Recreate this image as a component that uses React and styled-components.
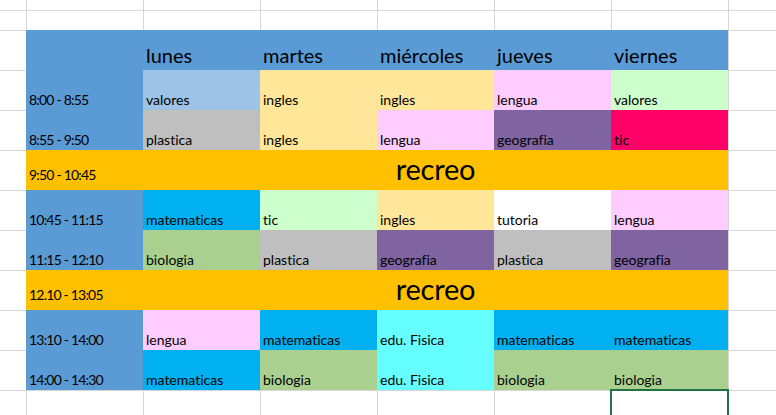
import React from "react";
import styled, { createGlobalStyle } from "styled-components";

const GlobalStyle = createGlobalStyle`
  html, body { margin: 0; padding: 0; background: #ffffff; overflow: hidden; }
  body {
    font-family: Lato, "Open Sans", sans-serif;
    color: #000;
    font-variant-ligatures: none;
    font-feature-settings: "liga" 0, "clig" 0;
  }
`;

const GRID = "#d6d6d6";

const Sheet = styled.div`
  display: grid;
  grid-template-columns: 26px repeat(6, 117px) 1fr;
  grid-template-rows: 10px 20px repeat(9, 40px) 40px;
  width: 776px;
  height: 415px;
  overflow: hidden;
`;

const Empty = styled.div`
  box-shadow: ${(p) =>
    [p.$noLeft ? null : `inset 1px 0 0 ${GRID}`, p.$noTop ? null : `inset 0 1px 0 ${GRID}`]
      .filter(Boolean)
      .join(", ") || "none"};
`;

const Selected = styled.div`
  position: relative;
  z-index: 1;
  box-shadow: 0 0 0 1px #217346, inset 0 0 0 1px #217346;
`;

const Cell = styled.div`
  display: flex;
  align-items: flex-end;
  background: ${(p) => p.$bg};
  padding: 0 0 ${(p) => p.$pb ?? 2}px 3px;
  font-size: ${(p) => p.$size ?? 14}px;
  line-height: normal;
  white-space: nowrap;
  overflow: hidden;
  grid-column: ${(p) => (p.$span ? `span ${p.$span}` : "auto")};
`;

const TimeCell = styled(Cell)`
  letter-spacing: -0.8px;
`;

const Recreo = styled(Cell)`
  justify-content: center;
  padding-left: 0;
  letter-spacing: -0.2px;
`;

const BLUE = "#5B9BD5";
const ORANGE = "#FFC000";
const C = {
  valores1: "#9DC3E6",
  ingles: "#FFE699",
  lengua: "#FFCCFF",
  valores2: "#CCFFCC",
  plastica: "#BFBFBF",
  geografia: "#8064A2",
  tic: "#FF0066",
  mate: "#00B0F0",
  bio: "#A9D08E",
  edu: "#66FFFF",
  white: "#FFFFFF",
};

const days = ["lunes", "martes", "miércoles", "jueves", "viernes"];

const rows = [
  { time: "8:00 - 8:55", cells: [["valores", C.valores1], ["ingles", C.ingles], ["ingles", C.ingles], ["lengua", C.lengua], ["valores", C.valores2]] },
  { time: "8:55 - 9:50", cells: [["plastica", C.plastica], ["ingles", C.ingles], ["lengua", C.lengua], ["geografia", C.geografia], ["tic", C.tic]] },
  { time: "9:50 - 10:45", recreo: true },
  { time: "10:45 - 11:15", cells: [["matematicas", C.mate], ["tic", C.valores2], ["ingles", C.ingles], ["tutoria", C.white], ["lengua", C.lengua]] },
  { time: "11:15 - 12:10", cells: [["biologia", C.bio], ["plastica", C.plastica], ["geografia", C.geografia], ["plastica", C.plastica], ["geografia", C.geografia]] },
  { time: "12.10 - 13:05", recreo: true },
  { time: "13:10 - 14:00", cells: [["lengua", C.lengua], ["matematicas", C.mate], ["edu. Fisica", C.edu], ["matematicas", C.mate], ["matematicas", C.mate]] },
  { time: "14:00 - 14:30", cells: [["matematicas", C.mate], ["biologia", C.bio], ["edu. Fisica", C.edu], ["biologia", C.bio], ["biologia", C.bio]] },
];

function EmptyRow({ top }) {
  return (
    <>
      {Array.from({ length: 8 }).map((_, i) => (
        <Empty key={i} $noLeft={i === 0} $noTop={top} />
      ))}
    </>
  );
}

export default function App() {
  return (
    <>
      <GlobalStyle />
      <Sheet>
        <EmptyRow top />
        <EmptyRow />

        <Empty $noLeft />
        <Cell $bg={BLUE} />
        {days.map((d) => (
          <Cell key={d} $bg={BLUE} $size={20} $pb={3}>
            {d}
          </Cell>
        ))}
        <Empty />

        {rows.map((r) => (
          <React.Fragment key={r.time}>
            <Empty $noLeft />
            {r.recreo ? (
              <>
                <TimeCell $bg={ORANGE} $pb={7}>{r.time}</TimeCell>
                <Recreo $bg={ORANGE} $span={5} $size={29} $pb={4}>
                  recreo
                </Recreo>
              </>
            ) : (
              <>
                <TimeCell $bg={BLUE}>{r.time}</TimeCell>
                {r.cells.map(([label, bg], i) => (
                  <Cell key={i} $bg={bg}>
                    {label}
                  </Cell>
                ))}
              </>
            )}
            <Empty />
          </React.Fragment>
        ))}

        <Empty $noLeft />
        <Empty />
        <Empty />
        <Empty />
        <Empty />
        <Empty />
        <Selected />
        <Empty />
      </Sheet>
    </>
  );
}
